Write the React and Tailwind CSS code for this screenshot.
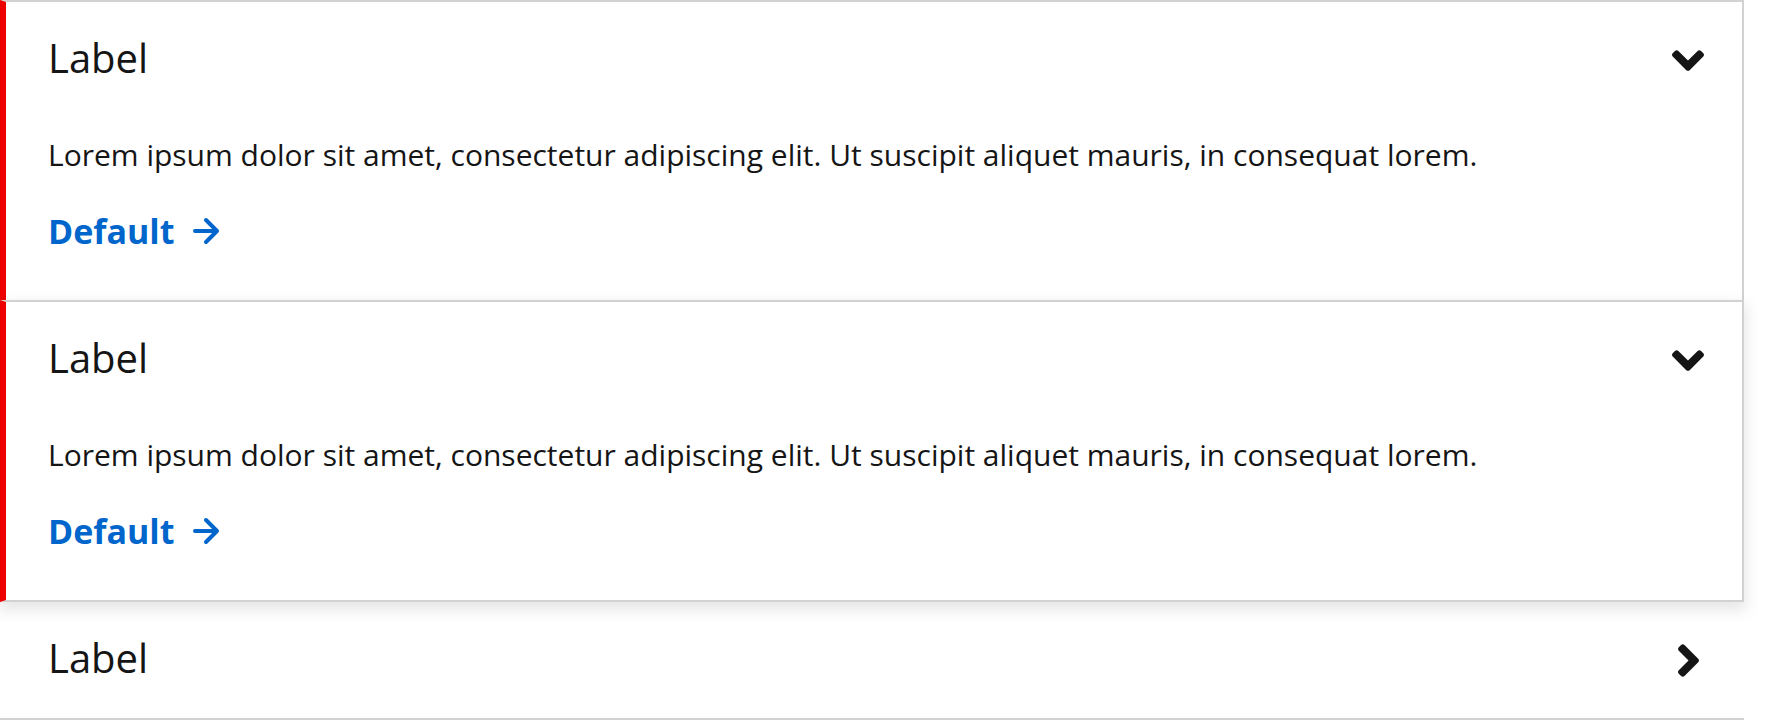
const FONT = "font-['Open_Sans',_'Liberation_Sans',_sans-serif]";

function AngleDown() {
  return (
    <svg width="32" height="21" viewBox="0 152 320 208" fill="#151515" aria-hidden="true">
      <path d="M143 352.3L7 216.3c-9.4-9.4-9.4-24.6 0-33.9l22.6-22.6c9.4-9.4 24.6-9.4 33.9 0l96.4 96.4 96.4-96.4c9.4-9.4 24.6-9.4 33.9 0l22.6 22.6c9.4 9.4 9.4 24.6 0 33.9l-136 136c-9.2 9.4-24.4 9.4-33.8 0z" />
    </svg>
  )
}

function AngleRight() {
  return (
    <svg width="21" height="33" viewBox="24 95 208 322" fill="#151515" aria-hidden="true">
      <path d="M224.3 273l-136 136c-9.4 9.4-24.6 9.4-33.9 0l-22.6-22.6c-9.4-9.4-9.4-24.6 0-33.9l96.4-96.4-96.4-96.4c-9.4-9.4-9.4-24.6 0-33.9L54.3 103c9.4-9.4 24.6-9.4 33.9 0l136 136c9.5 9.4 9.5 24.6.1 34z" />
    </svg>
  )
}

function ArrowRight() {
  return (
    <svg width="28" height="28" viewBox="0 0 28 28" fill="none" stroke="#0066cc" strokeWidth="4" strokeLinecap="round" strokeLinejoin="round" aria-hidden="true">
      <path d="M3 14h22M14 3l11 11-11 11" />
    </svg>
  )
}

function Header({ children }) {
  return (
    <div className="h-[116px] flex items-center justify-between pl-[42px] pr-[36px]">
      <span className="mb-[4px] text-[40px] leading-none text-[#151515]">Label</span>
      <span className="w-[36px] flex justify-center">{children}</span>
    </div>
  )
}

function Body() {
  return (
    <div className="pl-[42px] pt-[13px] pb-[45px]">
      <p className="text-[30px] leading-[48px] text-[#151515]">
        Lorem ipsum dolor sit amet, consectetur adipiscing elit. Ut suscipit aliquet mauris, in consequat lorem.
      </p>
      <a href="#" className="mt-[28px] flex items-center gap-[18px] h-[48px] text-[34px] font-bold text-[#0066cc]">
        Default
        <ArrowRight />
      </a>
    </div>
  )
}

export default function App() {
  return (
    <div className={`${FONT} bg-white min-h-[720px]`}>
      <div className="w-[1744px]">
        <div className="bg-white border-t-2 border-r-2 border-[#d2d2d2] border-l-[6px] border-l-[#ee0000]">
          <Header><AngleDown /></Header>
          <Body />
        </div>
        <div className="relative z-10 bg-white border-2 border-[#d2d2d2] border-l-[6px] border-l-[#ee0000] shadow-[0_6px_14px_2px_rgba(3,3,3,0.10)]">
          <Header><AngleDown /></Header>
          <Body />
        </div>
        <div className="bg-white border-b-2 border-[#d2d2d2] pl-[6px] pr-[2px]">
          <Header><AngleRight /></Header>
        </div>
      </div>
    </div>
  )
}
